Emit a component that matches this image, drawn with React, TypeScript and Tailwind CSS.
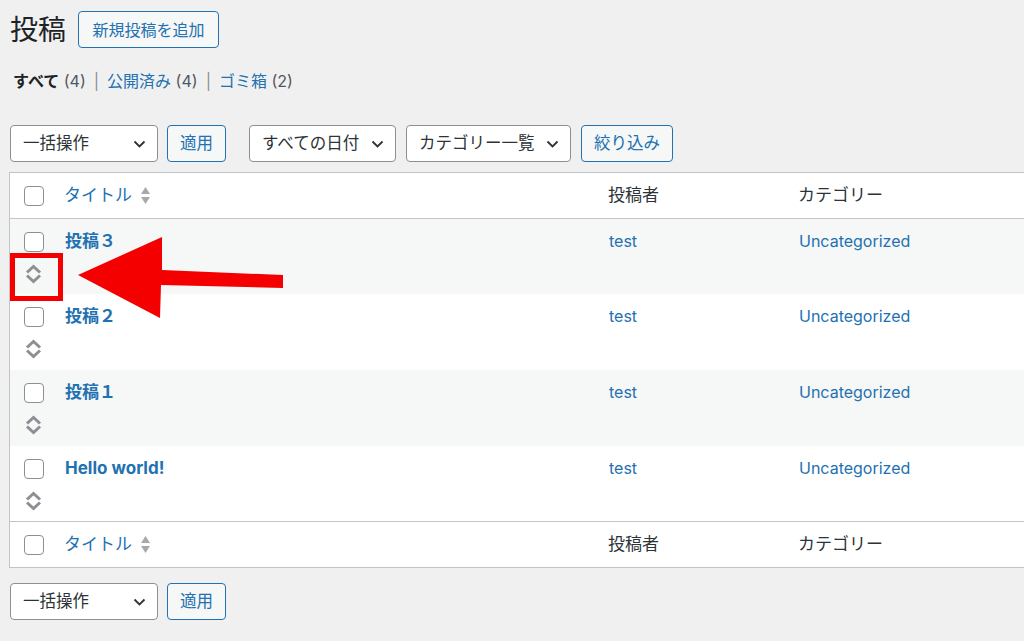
import React from "react";

const font = { fontFamily: 'Inter, "Noto Sans CJK JP", sans-serif' };

function Checkbox() {
  return <div className="w-[20px] h-[20px] rounded-[4px] border border-[#8c8f94] bg-white shrink-0" />;
}

function SortIcon() {
  return (
    <svg width="11" height="19" viewBox="0 0 11 19" className="ml-[8px]">
      <polygon points="1,8 5.5,1 10,8" fill="#a7aaad" />
      <polygon points="1,11 5.5,18 10,11" fill="#a7aaad" />
    </svg>
  );
}

function Handle() {
  return (
    <svg width="17" height="20" viewBox="0 0 17 20">
      <polyline points="2,8.5 8.5,2.5 15,8.5" fill="none" stroke="#8c8f94" strokeWidth="3" />
      <polyline points="2,11.5 8.5,17.5 15,11.5" fill="none" stroke="#8c8f94" strokeWidth="3" />
    </svg>
  );
}

function Chevron() {
  return (
    <svg width="13" height="8" viewBox="0 0 13 8" className="shrink-0">
      <polyline points="1.5,1.5 6.5,6.5 11.5,1.5" fill="none" stroke="#2c3338" strokeWidth="1.8" />
    </svg>
  );
}

function Select({ label, width }: { label: string; width?: string }) {
  return (
    <div
      className={`h-[37px] ${width ?? ""} flex items-center justify-between gap-[8px] pl-[12px] pr-[11px] bg-white border border-[#8c8f94] rounded-[4px] text-[16.5px] text-[#2c3338] whitespace-nowrap shrink-0`}
    >
      <span>{label}</span>
      <Chevron />
    </div>
  );
}

function Button({ label, className }: { label: string; className?: string }) {
  return (
    <div
      className={`h-[37px] flex items-center justify-center bg-[#f6f7f7] border border-[#2271b1] rounded-[4px] text-[16.5px] text-[#2271b1] whitespace-nowrap shrink-0 ${className ?? ""}`}
    >
      {label}
    </div>
  );
}

function HeadRow() {
  return (
    <div className="h-[45px] flex items-center bg-white text-[17px]">
      <div className="w-[55px] pl-[14px] flex items-center">
        <Checkbox />
      </div>
      <div className="w-[544px] flex items-center text-[#2271b1] -ml-[1px]">
        <span>タイトル</span>
        <SortIcon />
      </div>
      <div className="w-[190px] text-[#2c3338]">投稿者</div>
      <div className="flex-1 text-[#2c3338]">カテゴリー</div>
    </div>
  );
}

function Row({ title, bg, h }: { title: string; bg: string; h: string }) {
  return (
    <div className={`${h} flex ${bg} text-[16px]`}>
      <div className="w-[55px] pl-[14px] pt-[13px] flex flex-col">
        <Checkbox />
        <div className="mt-[12px] pl-[1px]">
          <Handle />
        </div>
      </div>
      <div className="w-[544px] pt-[10px] leading-[24px] text-[17px] font-bold text-[#2271b1]">{title}</div>
      <div className="w-[190px] pt-[10px] leading-[24px] text-[#2271b1]">test</div>
      <div className="flex-1 pt-[10px] leading-[24px] text-[#2271b1]">Uncategorized</div>
    </div>
  );
}

export default function App() {
  return (
    <div className="relative min-h-[641px] bg-[#f0f0f1] overflow-hidden" style={font}>
      <div className="pl-[10px] pt-[11px] flex items-center gap-[12px]">
        <h1 className="text-[28px] leading-[36px] text-[#1d2327]">投稿</h1>
        <Button label="新規投稿を追加" className="w-[141px] h-[36px] !text-[16px]" />
      </div>

      <div className="mt-[22px] pl-[13px] text-[16px] leading-[22px] text-[#50575e] whitespace-nowrap">
        <span className="font-bold text-[#1d2327]">すべて</span> (4)
        <span className="text-[#8c8f94] mx-[8px]">|</span>
        <span className="text-[#2271b1]">公開済み</span> (4)
        <span className="text-[#8c8f94] mx-[8px]">|</span>
        <span className="text-[#2271b1]">ゴミ箱</span> (2)
      </div>

      <div className="mt-[33px] pl-[10px] flex items-center">
        <Select label="一括操作" width="w-[148px]" />
        <Button label="適用" className="ml-[9px] w-[59px]" />
        <Select label="すべての日付" width="ml-[23px] w-[147px]" />
        <Select label="カテゴリー一覧" width="ml-[10px] w-[165px]" />
        <Button label="絞り込み" className="ml-[10px] w-[92px]" />
      </div>

      <div className="mt-[10px] ml-[9px] border-l border-t border-b border-[#c3c4c7]">
        <div className="border-b border-[#c3c4c7]">
          <HeadRow />
        </div>
        <Row title="投稿３" bg="bg-[#f6f7f7]" h="h-[75px]" />
        <Row title="投稿２" bg="bg-white" h="h-[76px]" />
        <Row title="投稿１" bg="bg-[#f6f7f7]" h="h-[76px]" />
        <Row title="Hello world!" bg="bg-white" h="h-[75px]" />
        <div className="border-t border-[#c3c4c7]">
          <HeadRow />
        </div>
      </div>

      <div className="mt-[15px] pl-[10px] flex items-center">
        <Select label="一括操作" width="w-[148px]" />
        <Button label="適用" className="ml-[9px] w-[59px]" />
      </div>

      {/* annotation overlay */}
      <div className="absolute left-[10px] top-[253px] w-[53px] h-[48px] border-[5px] border-[#f40000]" />
      <svg className="absolute left-0 top-0" width="300" height="330" viewBox="0 0 300 330">
        <polygon
          points="78,275 162,237 162,270 283,275 283,288 161,285 160,318"
          fill="#f40000"
        />
      </svg>
    </div>
  );
}
